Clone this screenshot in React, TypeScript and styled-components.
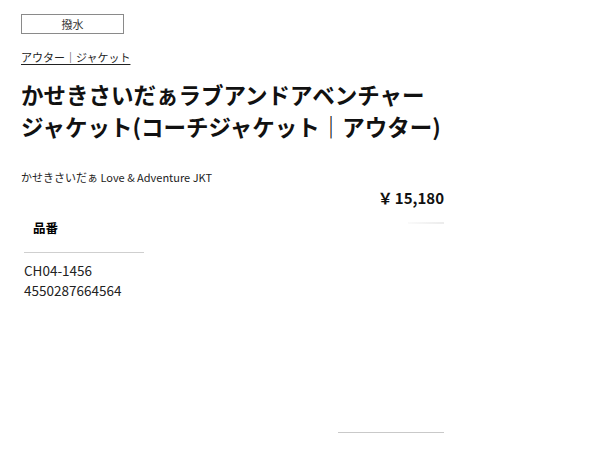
import React from "react";
import styled, { createGlobalStyle } from "styled-components";

const Global = createGlobalStyle`
  html, body { margin: 0; padding: 0; background: #fff; }
  body { font-family: "Noto Sans CJK JP", "Noto Sans", sans-serif; color: #000; }
`;

const Page = styled.div`
  width: 423px;
  padding: 14px 0 0 21px;
  display: flex;
  flex-direction: column;
`;

const Tag = styled.div`
  box-sizing: border-box;
  width: 103px;
  height: 20px;
  border: 1px solid #8a8a8a;
  font-size: 11px;
  line-height: 18px;
  text-align: center;
  color: #333;
`;

const Breadcrumb = styled.a`
  align-self: flex-start;
  margin-top: 15px;
  font-size: 11px;
  line-height: 16px;
  color: #222;
  text-decoration: underline;
  text-underline-offset: 2px;
`;

const Title = styled.h1`
  margin: 13px 0 0;
  font-size: 22.5px;
  line-height: 32px;
  font-weight: 700;
  color: #111;
`;

const Sub = styled.p`
  margin: 27px 0 0;
  font-size: 11px;
  line-height: 16px;
  color: #222;
`;

const Price = styled.div`
  margin-top: 3px;
  text-align: right;
  font-size: 15px;
  line-height: 20px;
  font-weight: 700;
  color: #111;
`;

const Yen = styled.span`
  margin-right: 2px;
`;

const Details = styled.div`
  display: flex;
  justify-content: space-between;
`;

const Spec = styled.div`
  width: 120px;
  margin-left: 3px;
`;

const SpecHead = styled.div`
  padding: 10px 0 14px 9px;
  font-size: 12.5px;
  line-height: 20px;
  font-weight: 700;
  border-bottom: 1px solid #cfcfcf;
`;

const SpecValues = styled.div`
  padding-top: 7px;
  font-size: 13.5px;
  line-height: 20px;
  color: #222;
`;

const Aside = styled.div`
  box-sizing: border-box;
  height: 225px;
  padding-top: 14px;
  display: flex;
  flex-direction: column;
  justify-content: space-between;
  align-items: flex-end;
`;

const Rule = styled.div<{ $w: number; $faint?: boolean }>`
  width: ${(p) => p.$w}px;
  height: ${(p) => (p.$faint ? 2 : 1)}px;
  background: ${(p) => (p.$faint ? "linear-gradient(to right, #fafafa, #ececec)" : "#c9c9c9")};
`;

export default function App() {
  return (
    <>
      <Global />
      <Page>
        <Tag>撥水</Tag>
        <Breadcrumb>アウター｜ジャケット</Breadcrumb>
        <Title>かせきさいだぁラブアンドアベンチャージャケット(コーチジャケット｜アウター)</Title>
        <Sub>かせきさいだぁ Love &amp; Adventure JKT</Sub>
        <Price>
          <Yen>￥</Yen>15,180
        </Price>
        <Details>
          <Spec>
            <SpecHead>品番</SpecHead>
            <SpecValues>
              CH04-1456
              <br />
              4550287664564
            </SpecValues>
          </Spec>
          <Aside>
            <Rule $w={36} $faint />
            <Rule $w={106} />
          </Aside>
        </Details>
      </Page>
    </>
  );
}
